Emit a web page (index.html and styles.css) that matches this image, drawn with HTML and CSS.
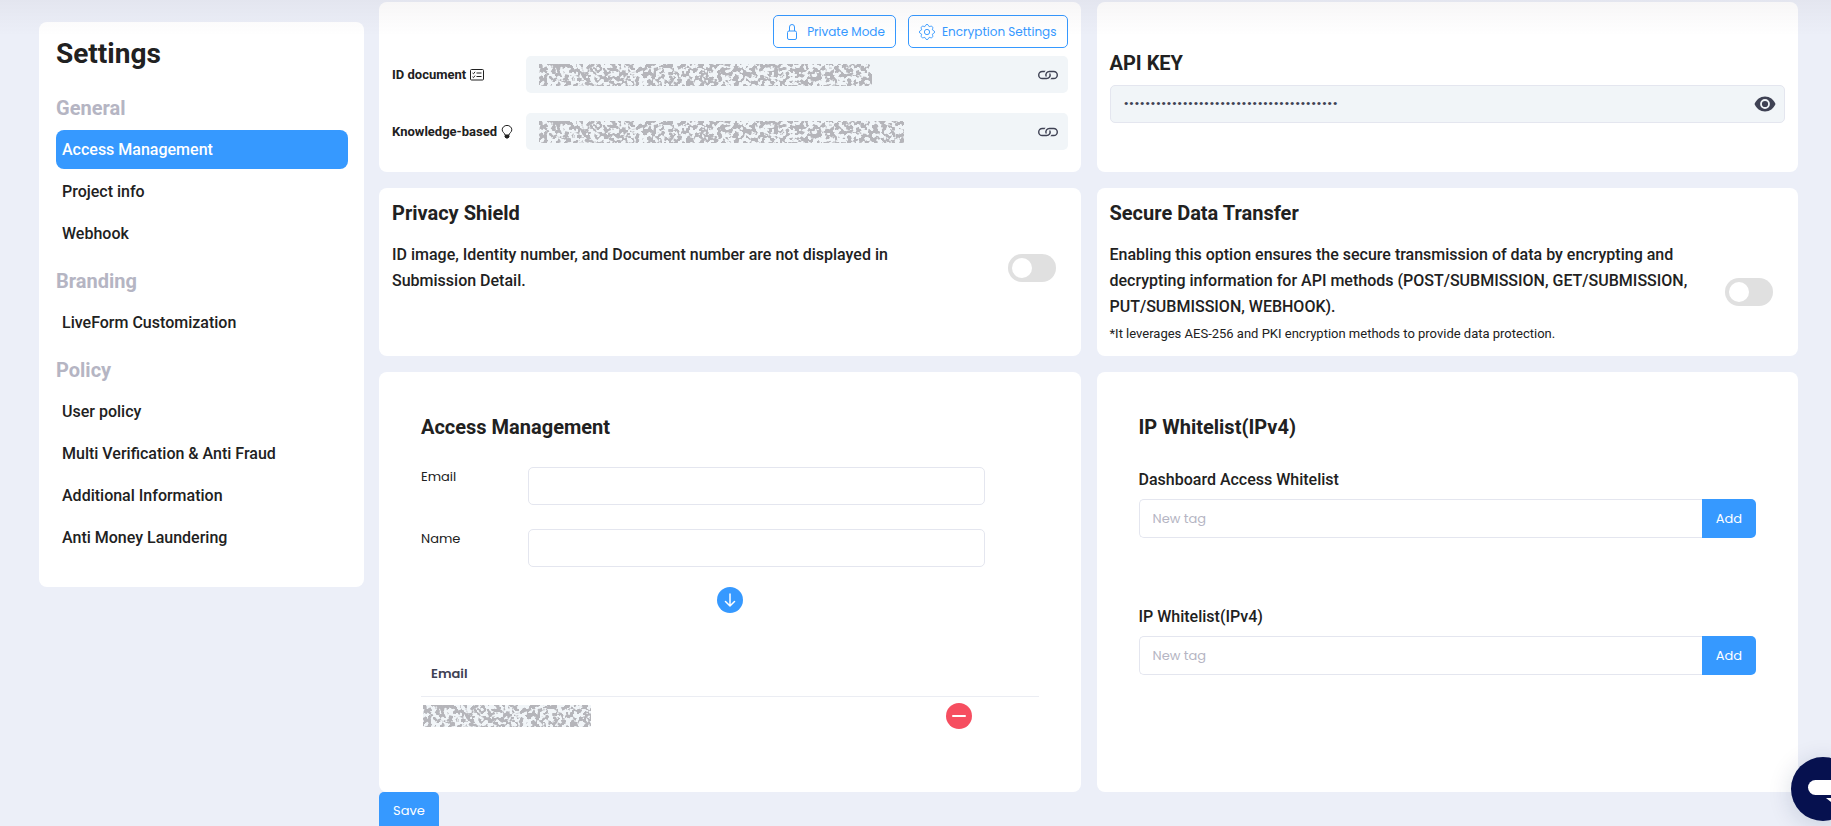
FILE: index.html
```html
<!DOCTYPE html>
<html lang="en">
<head>
  <meta charset="UTF-8" />
  <meta name="viewport" content="width=device-width, initial-scale=1.0" />
  <title>Settings</title>
  <link rel="stylesheet" href="styles.css">
</head>
<body>
  <!-- shared icons and the filter behind masked values -->
  <svg class="defs" width="0" height="0" aria-hidden="true">
    <filter id="noise" x="0" y="0" width="100%" height="100%" color-interpolation-filters="sRGB">
      <feTurbulence type="fractalNoise" baseFrequency="0.23" numOctaves="2" seed="11" />
      <feColorMatrix values="0 0 0 0 0.71  0 0 0 0 0.71  0 0 0 0 0.73  10 10 0 0 -9.5" />
    </filter>
    <symbol id="icon-link" viewBox="1 5 14 7">
      <path fill="currentColor" d="M6.354 5.500H4a3 3 0 0 0 0 6h3a3 3 0 0 0 2.830-4H9q-.13 0-.25.031A2 2 0 0 1 7 10.500H4a2 2 0 1 1 0-4h1.535c.218-.376.495-.714.82-1z" />
      <path fill="currentColor" d="M9 5.500a3 3 0 0 0-2.830 4h1.098A2 2 0 0 1 9 6.500h3a2 2 0 1 1 0 4h-1.535a4 4 0 0 1-.82 1H12a3 3 0 1 0 0-6z" />
    </symbol>
  </svg>

  <div class="top-shadow"></div>

  <div class="page">
    <nav class="sidebar">
      <h1>Settings</h1>
      <h2>General</h2>
      <a class="active" href="#access">Access Management</a>
      <a href="#project">Project info</a>
      <a href="#webhook">Webhook</a>
      <h2>Branding</h2>
      <a href="#liveform">LiveForm Customization</a>
      <h2>Policy</h2>
      <a href="#user-policy">User policy</a>
      <a href="#fraud">Multi Verification &amp; Anti Fraud</a>
      <a href="#additional">Additional Information</a>
      <a href="#aml">Anti Money Laundering</a>
    </nav>

    <main class="content">
      <div class="cards">
        <section class="card links">
          <div class="actions">
            <button class="btn-outline" type="button">
              <svg width="16" height="16" viewBox="0 0 16 16" fill="none" stroke="currentColor"><rect x="3.500" y="7" width="9" height="8.500" rx="1.500" /><path d="M5.500 7V3a2.500 2.500 0 0 1 5 0v4" /></svg>
              Private Mode
            </button>
            <button class="btn-outline" type="button">
              <svg width="16" height="16" viewBox="-.5 -.5 17 17" fill="none" stroke="currentColor"><circle cx="8" cy="8" r="2.800" /><path d="M9.796 1.343c-.527-1.790-3.065-1.790-3.592 0l-.094.319a.873.873 0 0 1-1.255.52l-.292-.16c-1.640-.892-3.433.902-2.540 2.541l.159.292a.873.873 0 0 1-.52 1.255l-.319.094c-1.790.527-1.790 3.065 0 3.592l.319.094a.873.873 0 0 1 .52 1.255l-.16.292c-.892 1.640.901 3.434 2.541 2.540l.292-.159a.873.873 0 0 1 1.255.52l.094.319c.527 1.790 3.065 1.790 3.592 0l.094-.319a.873.873 0 0 1 1.255-.52l.292.16c1.640.893 3.434-.902 2.540-2.541l-.159-.292a.873.873 0 0 1 .52-1.255l.319-.094c1.790-.527 1.790-3.065 0-3.592l-.319-.094a.873.873 0 0 1-.52-1.255l.16-.292c.893-1.640-.902-3.433-2.541-2.540l-.292.159a.873.873 0 0 1-1.255-.52z" /></svg>
              Encryption Settings
            </button>
          </div>
          <div class="link-row">
            <div class="link-label">ID document
              <svg width="14" height="12" viewBox="0 0 14 12" fill="none" stroke="currentColor"><rect x=".5" y=".5" width="13" height="10.500" rx="1" /><path d="M2.500 4l1 .8 1.500-2M2.500 7.800l1 .8L5 6.600M6.500 4H11.500M6.500 7.500H11.500" /></svg>
            </div>
            <div class="link-value">
              <svg class="masked masked-id"><rect width="100%" height="100%" filter="url(#noise)" /></svg>
              <button class="icon-btn" type="button" aria-label="Copy ID document link"><svg width="20" height="10"><use href="#icon-link" /></svg></button>
            </div>
          </div>
          <div class="link-row">
            <div class="link-label">Knowledge-based
              <svg width="12" height="14" viewBox="0 0 12 14" fill="none" stroke="currentColor"><path d="M4 10c0-1.800-2.800-2.700-2.800-5.200a4.700 4.300 0 0 1 9.600 0C10.800 7.300 8 8.200 8 10z" /><path d="M4 10.500h4v1.300L7 13H5l-1-1.200z" fill="currentColor" /></svg>
            </div>
            <div class="link-value">
              <svg class="masked masked-knowledge"><rect width="100%" height="100%" filter="url(#noise)" /></svg>
              <button class="icon-btn" type="button" aria-label="Copy knowledge-based link"><svg width="20" height="10"><use href="#icon-link" /></svg></button>
            </div>
          </div>
        </section>

        <section class="card api">
          <label class="title" for="api-key">API KEY</label>
          <div class="api-field">
            <input id="api-key" type="password" value="aaaaaaaaaaaaaaaaaaaaaaaaaaaaaaaaaaaaaaaa" readonly />
            <button class="icon-btn" type="button" aria-label="Show API key">
              <svg width="22" height="16" viewBox="0 0 22 16"><path fill="currentColor" d="M11 .5C6.200.5 2.300 3.500.5 8c1.800 4.500 5.700 7.500 10.500 7.500s8.700-3 10.500-7.500C19.700 3.500 15.800.5 11 .5z" /><circle cx="11" cy="8" r="4" fill="currentColor" stroke="#f1f5f8" stroke-width="1.800" /></svg>
            </button>
          </div>
        </section>

        <section class="card">
          <h3 class="title">Privacy Shield</h3>
          <div class="option">
            <label class="narrow" for="privacy">ID image, Identity number, and Document number are not displayed in Submission Detail.</label>
            <input class="toggle" id="privacy" type="checkbox" />
          </div>
        </section>

        <section class="card">
          <h3 class="title">Secure Data Transfer</h3>
          <div class="option">
            <label for="secure">Enabling this option ensures the secure transmission of data by encrypting and decrypting information for API methods (POST/SUBMISSION, GET/SUBMISSION, PUT/SUBMISSION, WEBHOOK).
              <small>*It leverages AES-256 and PKI encryption methods to provide data protection.</small>
            </label>
            <input class="toggle" id="secure" type="checkbox" />
          </div>
        </section>

        <section class="card large">
          <h3 class="title">Access Management</h3>
          <div class="form-row">
            <label for="email">Email</label>
            <input id="email" type="text" />
          </div>
          <div class="form-row">
            <label for="name">Name</label>
            <input id="name" type="text" />
          </div>
          <button class="round add" type="button" aria-label="Add member">
            <svg width="14" height="14" viewBox="0 0 14 14" fill="none" stroke="currentColor" stroke-width="1.500" stroke-linecap="round" stroke-linejoin="round"><path d="M7 1v12M2.500 8.500L7 13l4.500-4.500" /></svg>
          </button>
          <table>
            <thead>
              <tr><th>Email</th><th class="action"></th></tr>
            </thead>
            <tbody>
              <tr>
                <td><svg class="masked masked-email"><rect width="100%" height="100%" filter="url(#noise)" /></svg></td>
                <td class="action">
                  <button class="round remove" type="button" aria-label="Remove member">
                    <svg width="14" height="14" viewBox="0 0 14 14" stroke="currentColor" stroke-width="2" stroke-linecap="round"><path d="M1 7h12" /></svg>
                  </button>
                </td>
              </tr>
            </tbody>
          </table>
        </section>

        <section class="card large">
          <h3 class="title">IP Whitelist(IPv4)</h3>
          <div class="whitelist">
            <label for="dashboard-ip">Dashboard Access Whitelist</label>
            <div class="input-group">
              <input id="dashboard-ip" type="text" placeholder="New tag" />
              <button class="btn" type="button">Add</button>
            </div>
          </div>
          <div class="whitelist">
            <label for="ip">IP Whitelist(IPv4)</label>
            <div class="input-group">
              <input id="ip" type="text" placeholder="New tag" />
              <button class="btn" type="button">Add</button>
            </div>
          </div>
        </section>
      </div>
      <button class="btn save" type="button">Save</button>
    </main>
  </div>

  <button class="chat" type="button" aria-label="Open chat">
    <svg width="64" height="64" viewBox="0 0 64 64" fill="#fff"><rect x="17" y="23" width="36" height="15" rx="7.500" /><path d="M35 41h15v12z" /></svg>
  </button>
</body>
</html>
```

FILE: styles.css
```css
* {
  box-sizing: border-box;
}

body {
  margin: 0;
  height: 100vh;
  overflow: hidden;
  background: #eceff8;
  color: #212121;
  font-family: Roboto, sans-serif;
  font-size: 16px;
}

h1, h2, h3 {
  margin: 0;
  font-weight: 700;
}

button, input {
  font-family: Poppins, Inter, sans-serif;
  font-size: 13px;
}

button {
  cursor: pointer;
}

svg {
  display: block;
  flex: none;
}

.defs {
  position: absolute;
}

.top-shadow {
  position: fixed;
  top: 0;
  left: 0;
  right: 0;
  height: 36px;
  background: linear-gradient(rgba(40, 15, 30, 0.04), rgba(40, 15, 30, 0));
  pointer-events: none;
  z-index: 2;
}

.page {
  display: grid;
  grid-template-columns: 325px 1fr;
  align-items: start;
  gap: 15px;
  padding: 2px 33px 0 39px;
}

/* sidebar */

.sidebar {
  display: flex;
  flex-direction: column;
  gap: 3px;
  margin-top: 20px;
  padding: 15px 16px 30px 17px;
  background: #fff;
  border-radius: 8px;
}

.sidebar h1 {
  margin-bottom: 9px;
  font-size: 28px;
  line-height: 34px;
}

.sidebar h2 {
  margin: 11px 0 5px;
  color: #b5b5c3;
  font-size: 20px;
  line-height: 28px;
}

.sidebar a {
  padding: 0 6px;
  border-radius: 8px;
  color: inherit;
  font-weight: 500;
  line-height: 39px;
  text-decoration: none;
}

.sidebar .active {
  background: #3699ff;
  color: #fff;
}

/* cards */

.cards {
  display: grid;
  grid-template-columns: 1fr 1fr;
  gap: 16px;
}

.card {
  padding: 11px 13px 14px;
  background: #fff;
  border-radius: 8px;
}

.title {
  font-size: 20px;
  font-weight: 700;
  line-height: 28px;
}

.btn {
  height: 38px;
  padding: 0 14px;
  border: none;
  border-radius: 5px;
  background: #3699ff;
  color: #fff;
}

.btn-outline {
  display: flex;
  align-items: center;
  gap: 7px;
  height: 33px;
  padding: 0 10px;
  border: 1px solid #3699ff;
  border-radius: 5px;
  background: none;
  color: #3699ff;
  font-size: 12px;
}

.icon-btn {
  padding: 0;
  border: none;
  background: none;
  color: #3f4254;
}

.masked {
  height: 22px;
  background: #f1f5f8;
}

.masked-id {
  width: 333px;
}

.masked-knowledge {
  width: 365px;
}

.masked-email {
  width: 168px;
}

.links {
  padding: 13px 13px 22px;
}

.actions {
  display: flex;
  justify-content: flex-end;
  gap: 12px;
  margin-bottom: 8px;
}

.link-row {
  display: grid;
  grid-template-columns: 134px 1fr;
  align-items: center;
}

.link-row + .link-row {
  margin-top: 20px;
}

.link-label {
  display: flex;
  align-items: center;
  gap: 4px;
  font-size: 13px;
  font-weight: 700;
}

.link-value {
  display: flex;
  align-items: center;
  justify-content: space-between;
  height: 37px;
  padding: 0 10px 0 13px;
  border-radius: 5px;
  background: #f1f5f8;
}

.api {
  display: flex;
  flex-direction: column;
  justify-content: center;
  gap: 8px;
}

.api-field {
  display: flex;
  align-items: center;
  height: 38px;
  padding: 0 8px 0 13px;
  border: 1px solid #e4e6ef;
  border-radius: 5px;
  background: #f1f5f8;
}

.api-field input {
  flex: 1;
  padding: 0;
  border: none;
  outline: none;
  background: none;
  color: #3f4254;
}

.option {
  display: flex;
  align-items: center;
  gap: 13px;
  margin-top: 15px;
  padding-right: 12px;
}

.option label {
  flex: 1;
  font-weight: 500;
  line-height: 26px;
}

.option .narrow {
  padding-right: 60px;
}

.option small {
  display: block;
  margin-top: 6px;
  font-size: 13px;
  font-weight: 400;
  line-height: 16px;
}

.toggle {
  appearance: none;
  flex: none;
  width: 48px;
  height: 28px;
  margin: 0;
  padding: 4px;
  border-radius: 14px;
  background: #e0e0e0;
}

.toggle::before {
  content: "";
  display: block;
  width: 20px;
  height: 20px;
  border-radius: 50%;
  background: #fff;
}

.toggle:checked {
  background: #3699ff;
}

.toggle:checked::before {
  margin-left: auto;
}

.large {
  padding: 41px 42px 57px;
}

.large .title {
  margin-bottom: 26px;
}

.form-row {
  display: grid;
  grid-template-columns: 107px 1fr;
  margin-bottom: 24px;
  padding-right: 54px;
}

.form-row label {
  font: 13px/20px Poppins, Inter, sans-serif;
}

.form-row input,
.input-group input {
  height: 38px;
  padding: 0 13px;
  border: 1px solid #e4e6ef;
  border-radius: 5px;
}

.round {
  display: flex;
  align-items: center;
  justify-content: center;
  width: 26px;
  height: 26px;
  margin: 0 auto;
  padding: 0;
  border: none;
  border-radius: 50%;
  color: #fff;
}

.add {
  margin-top: -4px;
  background: #3699ff;
}

.remove {
  background: #f64e60;
}

table {
  width: 100%;
  margin-top: 41px;
  border-collapse: collapse;
}

th {
  height: 42px;
  padding: 0 10px 2px;
  border-bottom: 1px solid #ebedf3;
  color: #3f4254;
  font: 600 13px Poppins, Inter, sans-serif;
  text-align: left;
}

td {
  height: 39px;
  padding: 0 2px;
}

.action {
  width: 160px;
}

.whitelist {
  margin-bottom: 66px;
}

.whitelist:last-child {
  margin-bottom: 0;
}

.whitelist label {
  display: block;
  margin-bottom: 6px;
  font-weight: 500;
  line-height: 26px;
}

.input-group {
  display: flex;
}

.input-group input,
.input-group .btn {
  height: 39px;
}

.input-group input {
  flex: 1;
  border-right: none;
  border-radius: 5px 0 0 5px;
}

.input-group input::placeholder {
  color: #b5b5c3;
}

.input-group .btn {
  border-radius: 0 5px 5px 0;
}

.save {
  display: block;
}

/* chat launcher, partly past the window edge */

.chat {
  position: fixed;
  right: -24px;
  bottom: 5px;
  width: 64px;
  height: 64px;
  padding: 0;
  border: none;
  border-radius: 50%;
  background: #06114f;
  box-shadow: 0 4px 24px rgba(6, 40, 80, 0.16);
  z-index: 3;
}
```
